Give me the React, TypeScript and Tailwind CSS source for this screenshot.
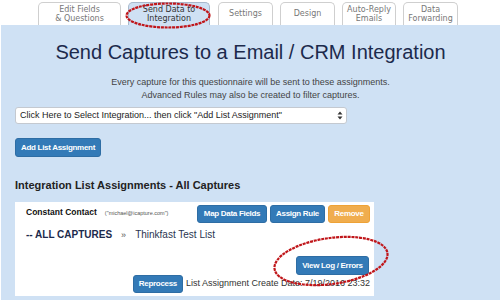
const tabs = [
  { label: ["Edit Fields", "& Questions"], w: "w-[83px]", ml: "ml-[38px]", active: false },
  { label: ["Send Data to", "Integration"], w: "w-[82px]", ml: "ml-[7px]", active: true },
  { label: ["Settings"], w: "w-[55px]", ml: "ml-[8px]", active: false },
  { label: ["Design"], w: "w-[55px]", ml: "ml-[7px]", active: false },
  { label: ["Auto-Reply", "Emails"], w: "w-[54px]", ml: "ml-[7px]", active: false },
  { label: ["Data", "Forwarding"], w: "w-[55px]", ml: "ml-[7px]", active: false },
];

function Btn({ children, className = "" }: { children: React.ReactNode; className?: string }) {
  return (
    <button
      className={`h-[18px] rounded-[3px] border border-[#2e6da4] bg-[#337ab7] text-white text-[8px] font-bold tracking-[-0.3px] leading-none whitespace-nowrap flex items-center justify-center ${className}`}
    >
      {children}
    </button>
  );
}

export default function App() {
  return (
    <div className="relative w-[500px] h-[300px] overflow-hidden bg-white font-['Liberation_Sans',Arial,sans-serif]">
      {/* tabs */}
      <div className="flex items-end h-[25px] pt-[2px]">
        {tabs.map((t) => (
          <div
            key={t.label.join(" ")}
            className={`${t.w} ${t.ml} h-[23px] rounded-t-[5px] border border-b-0 flex flex-col items-center justify-center font-['DejaVu_Sans',sans-serif] text-[8px] leading-[9.5px] ${
              t.active ? "bg-[#cfe1f4] border-[#a9b9cc] text-[#333]" : "bg-white border-[#cfcfcf] text-[#777]"
            }`}
          >
            {t.label.map((l) => (
              <span key={l}>{l}</span>
            ))}
          </div>
        ))}
      </div>

      {/* panel */}
      <div className="h-[275px] bg-[#cfe1f4] ml-[1px] pt-[15px] px-[14px] flex flex-col">
        <h1 className="text-center text-[20px] leading-[24px] text-[#1c2a4c]">
          Send Captures to a Email / CRM Integration
        </h1>
        <p className="mt-[12px] text-center text-[9px] leading-[13px] text-[#444]">
          Every capture for this questionnaire will be sent to these assignments.
          <br />
          Advanced Rules may also be created to filter captures.
        </p>
        <div className="mt-[5px] w-[332px] h-[17px] bg-white border border-[#c4c9d0] rounded-[3px] flex items-center justify-between pl-[4px] pr-[3px] text-[9px] text-[#222]">
          <span>Click Here to Select Integration... then click "Add List Assignment"</span>
          <svg width="6" height="9" viewBox="0 0 6 9">
            <path d="M3 0.5 L5.5 3.5 H0.5 Z M3 8.5 L0.5 5.5 H5.5 Z" fill="#333" />
          </svg>
        </div>
        <div className="mt-[14px]">
          <Btn className="h-[19px] w-[86px]">Add List Assignment</Btn>
        </div>
        <h2 className="mt-[21px] text-[11px] leading-[14px] font-bold text-[#222]">
          Integration List Assignments - All Captures
        </h2>

        <div className="mt-[10px] w-[359px] h-[94px] bg-white pl-[11px] pr-[4px] pt-[3px] flex flex-col">
          <div className="flex items-center justify-between">
            <div className="flex items-baseline gap-[8px] -mt-[3px]">
              <span className="text-[8.5px] font-bold text-[#111]">Constant Contact</span>
              <span className="text-[5.5px] text-[#555]">("michael@icapture.com")</span>
            </div>
            <div className="flex gap-[3px]">
              <Btn className="w-[70px]">Map Data Fields</Btn>
              <Btn className="w-[55px]">Assign Rule</Btn>
              <Btn className="w-[42px] !bg-[#f0ad4e] !border-[#eea236]">Remove</Btn>
            </div>
          </div>
          <div className="mt-[5px] flex items-center text-[10px] leading-[14px]">
            <span className="font-bold text-[#1c2a4c]">-- ALL CAPTURES</span>
            <span className="ml-[9px] text-[#555] text-[9px]">»</span>
            <span className="ml-[9px] text-[#2a3550]">Thinkfast Test List</span>
          </div>
          <div className="mt-[14px] flex justify-end pr-[1px]">
            <Btn className="h-[19px] w-[73px]">View Log / Errors</Btn>
          </div>
          <div className="flex items-center justify-end">
            <Btn className="w-[50px]">Reprocess</Btn>
            <span className="ml-[3px] text-[9px] text-[#333] whitespace-nowrap">
              List Assignment Create Date: 7/19/2016 23:32
            </span>
          </div>
        </div>
      </div>

      {/* red annotation ellipses */}
      <svg className="absolute inset-0 pointer-events-none" width="500" height="300" viewBox="0 0 500 300">
        <ellipse cx="168" cy="15.5" rx="41.5" ry="12" fill="none" stroke="#c0161a" strokeWidth="2.2" strokeDasharray="3 0.8" />
        <ellipse
          cx="331"
          cy="261"
          rx="57"
          ry="23"
          fill="none"
          stroke="#c0161a"
          strokeWidth="2.2"
          strokeDasharray="3 0.8"
          transform="rotate(-8 331 261)"
        />
      </svg>
    </div>
  );
}
